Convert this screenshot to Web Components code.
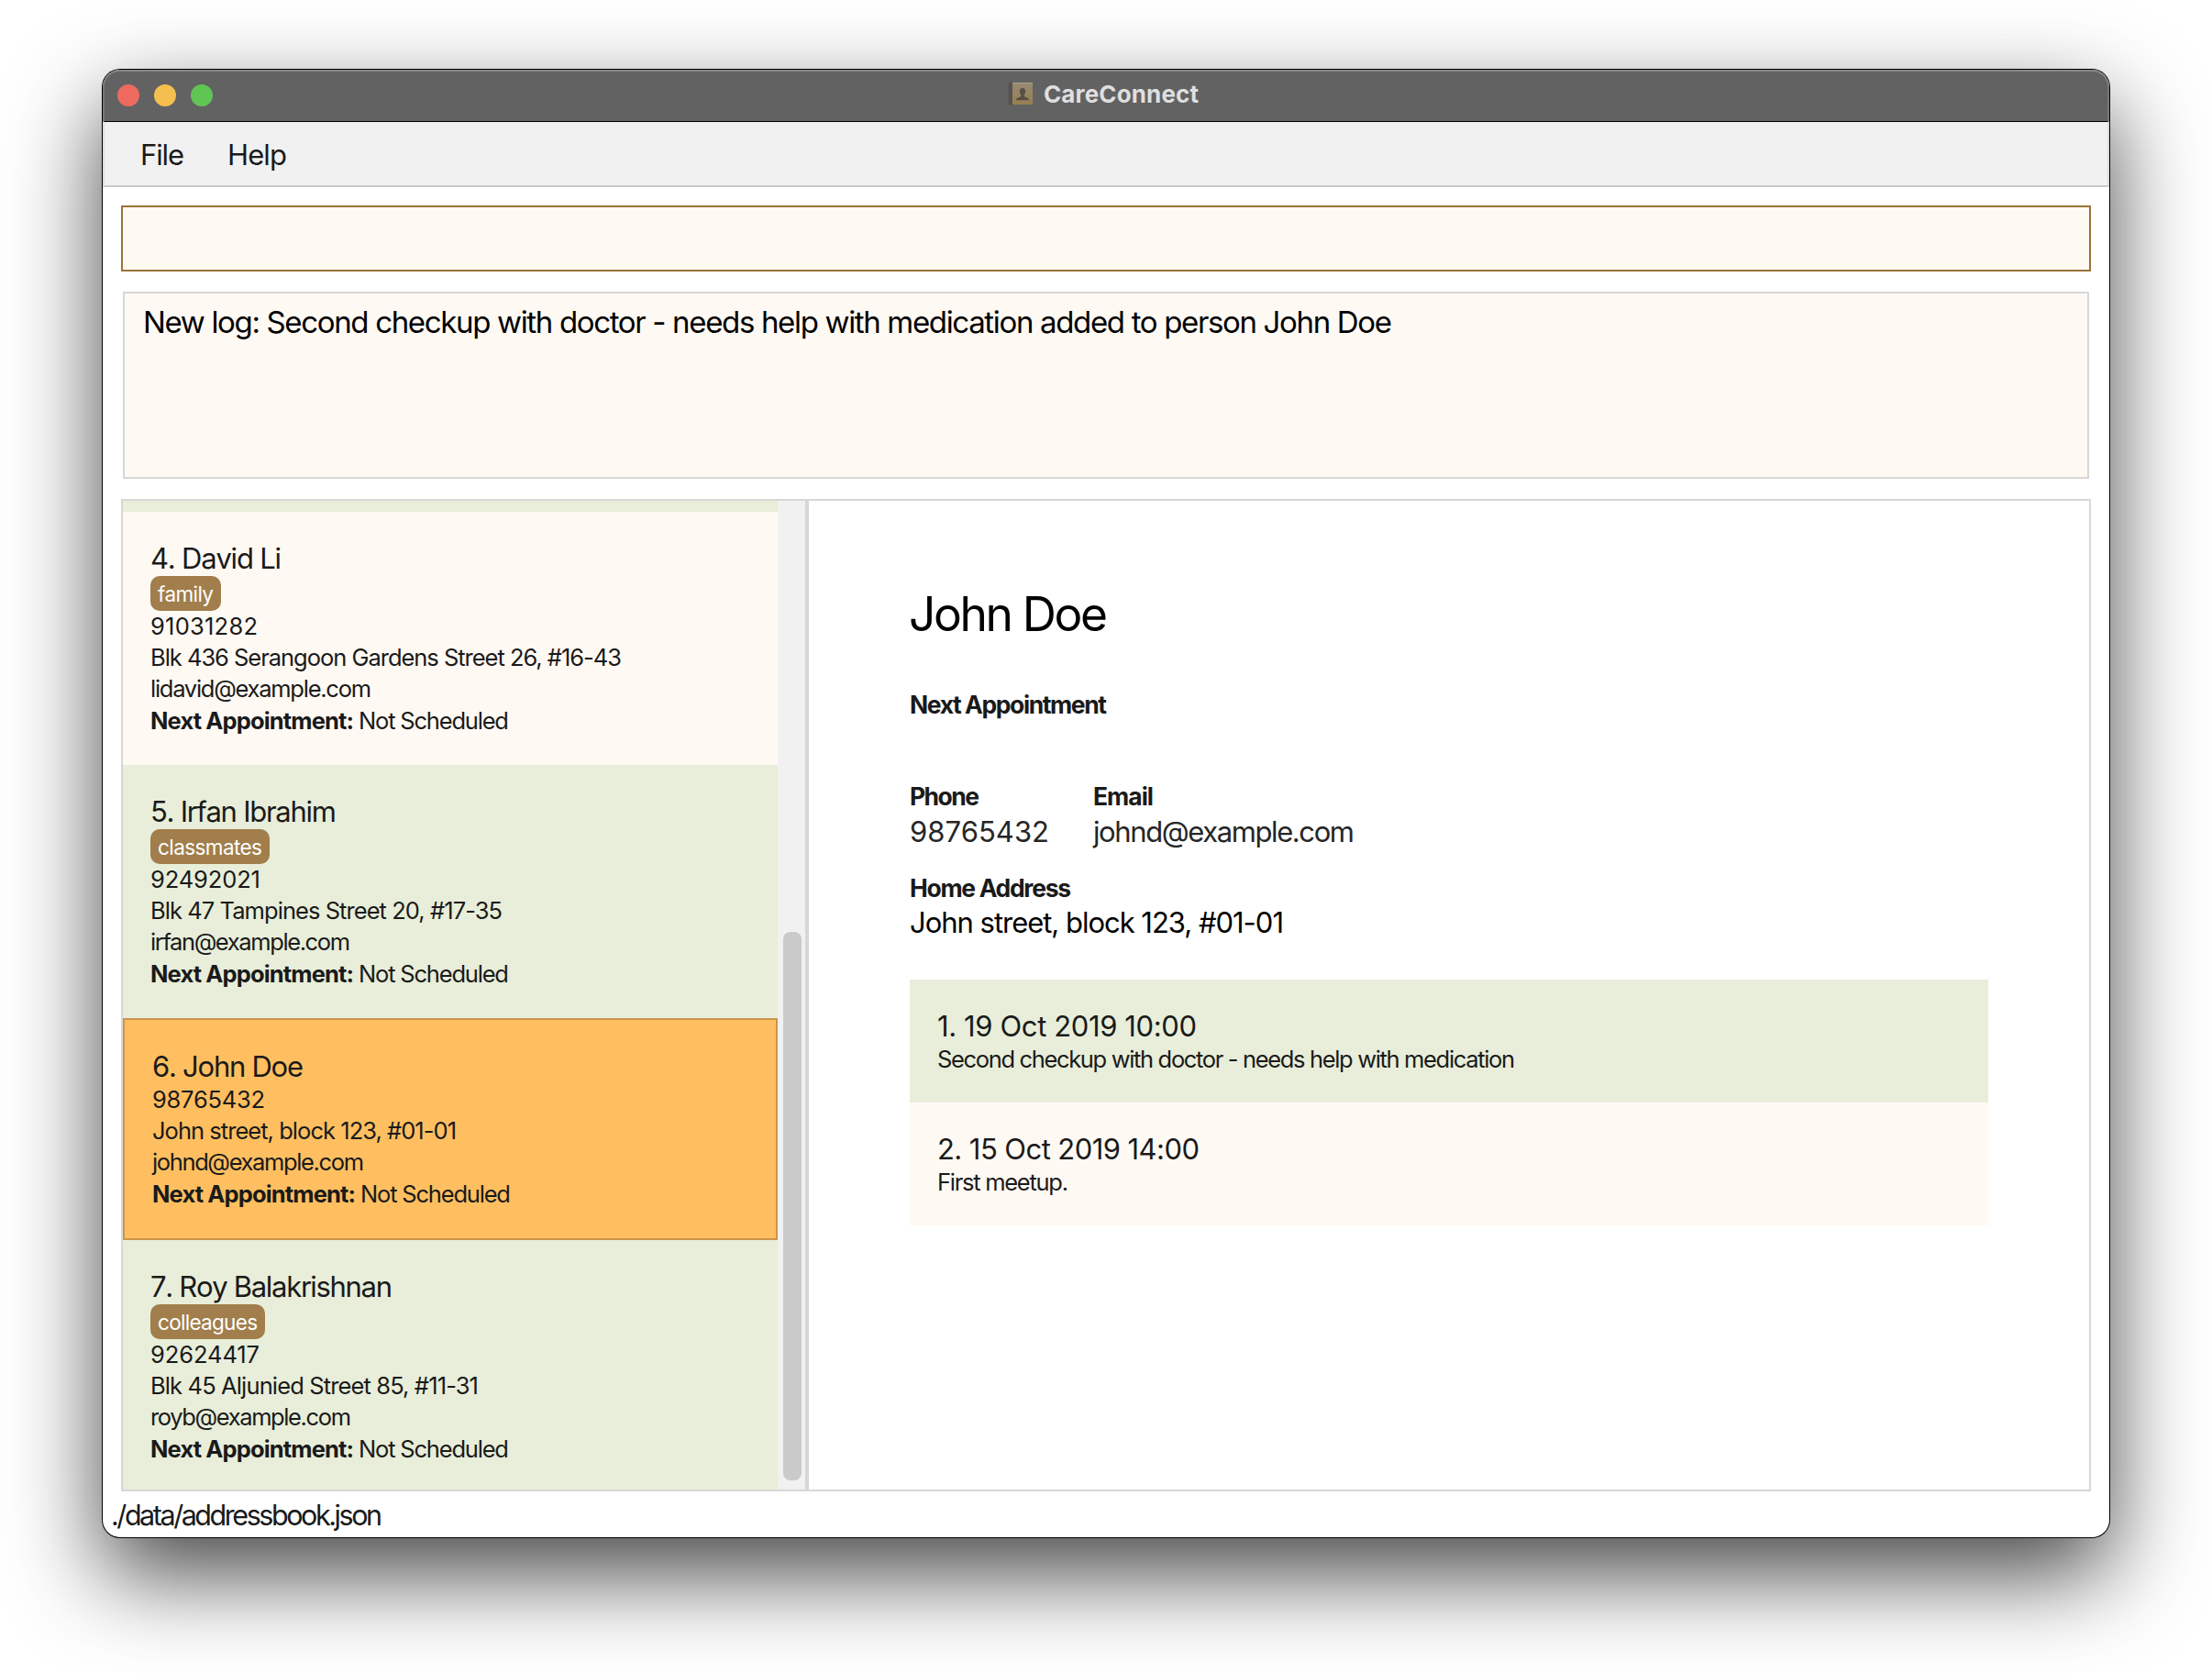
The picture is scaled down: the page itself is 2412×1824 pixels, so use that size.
<!DOCTYPE html>
<html lang="en"><head><meta charset="utf-8"><title>CareConnect</title>
<style>
html,body{margin:0;height:100%;background:#fff;overflow:hidden}
body{display:flex;font-family:Inter,"Liberation Sans",sans-serif;color:#1a1a1a}
</style></head><body>
<app-window></app-window>
<script>
const define=(name,html,after)=>customElements.define(name,class extends HTMLElement{
  constructor(){super();this.attachShadow({mode:'open'});}
  connectedCallback(){this.shadowRoot.innerHTML=typeof html==='function'?html(this):html;if(after)after(this);}
});

/* One line of text, tracked so that it spans w pixels. Attributes: s font size, w width, h line height. */
const lines=[];
define('text-line',e=>`<style>:host{display:block;white-space:pre;height:${e.getAttribute('h')||40}px;line-height:${e.getAttribute('h')||40}px;font-size:${e.getAttribute('s')}px}
span{display:inline-block}</style><span><slot></slot></span>`,e=>lines.push(e));
function track(){
  for(const e of lines){
    const w=+e.getAttribute('w');if(!w)continue;
    const s=e.shadowRoot.querySelector('span'),n=e.textContent.length;
    const d=(w-s.getBoundingClientRect().width)/(n-1);
    s.style.letterSpacing=d.toFixed(3)+'px';s.style.marginRight=(-d).toFixed(3)+'px';
  }
}

define('traffic-lights',`<style>:host{display:flex;gap:16px}i{width:24px;height:24px;border-radius:50%}</style>
<i style="background:#ed6a5e"></i><i style="background:#f5bf4f"></i><i style="background:#61c554"></i>`);

define('book-icon',`<style>:host{display:block;width:28px;height:26px;margin-bottom:4px}svg{display:block}</style>
<svg width="28" height="26" viewBox="0 0 28 26"><defs><linearGradient id="g" x1="0" y1="0" x2="0" y2="1"><stop offset="0" stop-color="#978a75"/><stop offset="1" stop-color="#95804f"/></linearGradient></defs>
<rect x="0.5" y="0.5" width="6" height="25" rx="1.5" fill="#575350"/><rect x="5" y="1" width="22" height="24" rx="1" fill="url(#g)"/><path d="M5 1.500h22" stroke="#aaa08e"/>
<path d="M16 7c2.200 0 3.200 1.500 3.200 3.600 0 1.700-.9 3-1.500 3.900v1.700c1.800.9 5.300 1.200 5.300 4.100H9c0-2.900 3.500-3.200 5.300-4.100v-1.700c-.6-.9-1.500-2.200-1.500-3.900C12.800 8.500 13.800 7 16 7z" fill="#574f45"/></svg>`);

define('title-bar',`<style>:host{display:grid;grid-template-columns:1fr auto 1fr;align-items:center;height:56px;box-sizing:border-box;padding:0 16px;background:#626262;box-shadow:inset 0 2px #868686,inset 2px 0 #777,inset -2px 0 #777;border-radius:19px 19px 0 0;color:#dfdfdf}
div{display:flex;align-items:center;gap:11px;padding-right:6px}text-line{font-weight:700}</style>
<traffic-lights></traffic-lights><div><book-icon></book-icon><text-line s="26" w="169" h="50" style="margin-bottom:3px">CareConnect</text-line></div><span></span>`);

define('menu-bar',`<style>:host{display:flex;gap:47px;height:72px;box-sizing:border-box;padding:0 39px;border:2px solid #c9c9c9;border-top:1px solid #000;border-left-color:#dcdcdc;border-right-color:#dcdcdc;background:#f1f1f1}</style>
<text-line s="31" w="48" h="71">File</text-line><text-line s="31" w="65" h="71">Help</text-line>`);

define('command-box',`<style>:host{display:block;height:72px;box-sizing:border-box;border:2px solid #9a7237;background:#fff9f3}</style>`);
define('result-box',`<style>:host{display:block;height:204px;box-sizing:border-box;margin:0 2px;border:2px solid #d7d7d7;background:#fff9f3;padding:10px 20px;color:#000}</style><slot></slot>`);

define('tag-chip',e=>`<style>:host{display:block;height:38px;width:max-content;box-sizing:border-box;padding:0 8px;border-radius:10px;background:#a17e4b;color:#fff}</style><text-line s="22.500" w="${e.getAttribute('w')}" h="39">${e.getAttribute('label')}</text-line>`);

define('person-card',e=>`<style>:host{display:flex;flex-direction:column;height:276px;flex:none;box-sizing:border-box;padding:32px 30px 0;background:${e.getAttribute('bg')}}
:host([selected]){height:242px;padding:32px 30px;border:2px solid #cc9549}
.next{display:flex;gap:5px;margin-top:1px}.tag{display:flex;height:38px}</style>
<slot name="name"></slot><div class="tag" ${e.hasAttribute('selected')?'style="display:none"':''}><slot name="tag"></slot></div>
<slot></slot>
<div class="next"><text-line style="font-weight:700" s="25.500" w="222" h="34">Next Appointment:</text-line><text-line s="25.500" w="164" h="34">Not Scheduled</text-line></div>`);

define('scroll-track',`<style>:host{display:flex;flex-direction:column;justify-content:flex-end;box-sizing:border-box;width:30px;padding:0 4px 10px 6px;background:#f1f1f1}i{height:598px;border-radius:8px;background:#cacaca}</style><i></i>`);

const p=(bg,name,nw,tag,tw,rows,sel)=>`<person-card bg="${bg}" ${sel?'selected':''}><text-line slot="name" style="font-kerning:none" s="31" w="${nw}" h="38">${name}</text-line>${tag?`<tag-chip slot="tag" label="${tag}" w="${tw}"></tag-chip>`:''}${rows.map(r=>`<text-line s="25.500" w="${r[1]}" h="34">${r[0]}</text-line>`).join('')}</person-card>`;
define('person-list',`<style>:host{display:flex;flex-direction:column;width:714px;overflow:hidden}i{height:12px;flex:none;background:#e8eed9}</style><i></i>`
+p('#fff9f3','4. David Li',143,'family',61,[['91031282',117],['Blk 436 Serangoon Gardens Street 26, #16-43',514],['lidavid@example.com',241]])
+p('#e8eed9','5. Irfan Ibrahim',203,'classmates',114,[['92492021',120],['Blk 47 Tampines Street 20, #17-35',384],['irfan@example.com',218]])
+p('#ffbf60','6. John Doe',165,'',0,[['98765432',123],['John street, block 123, #01-01',332],['johnd@example.com',231]],1)
+p('#e8eed9','7. Roy Balakrishnan',264,'colleagues',109,[['92624417',119],['Blk 45 Aljunied Street 85, #11-31',358],['royb@example.com',219]]));

define('log-card',e=>`<style>:host{display:flex;flex-direction:column;height:134px;box-sizing:border-box;padding:32px 30px;background:${e.getAttribute('bg')}}</style><slot></slot>`);

define('person-detail',`<style>:host{display:flex;flex-direction:column;flex:1;padding:90px 110px 0}
.b{font-weight:700}.pair{display:flex;gap:49px}.light{color:#262626}section{display:flex;flex-direction:column;margin-top:41px}</style>
<text-line style="color:#000;margin-left:-1px" s="51.500" w="217" h="66">John Doe</text-line>
<text-line class="b" style="margin-top:49px" s="26.500" w="215" h="34">Next Appointment</text-line>
<div class="pair" style="margin-top:66px"><div><text-line class="b" s="26.500" w="76" h="34">Phone</text-line><text-line class="light" s="31" w="152" h="44">98765432</text-line></div>
<div style="margin-left:-1px"><text-line class="b" s="26.500" w="66" h="34">Email</text-line><text-line class="light" s="31" w="285" h="44">johnd@example.com</text-line></div></div>
<text-line class="b" style="margin-top:22px" s="26.500" w="176" h="34">Home Address</text-line>
<text-line style="color:#000" s="31" w="408" h="42">John street, block 123, #01-01</text-line>
<section><log-card bg="#e8eed9"><text-line s="31" w="283" h="38">1. 19 Oct 2019 10:00</text-line><text-line s="25.500" w="630" h="34">Second checkup with doctor - needs help with medication</text-line></log-card>
<log-card bg="#fff9f3"><text-line s="31" w="286" h="38">2. 15 Oct 2019 14:00</text-line><text-line s="25.500" w="143" h="34">First meetup.</text-line></log-card></section>`);

define('split-pane',`<style>:host{display:flex;height:1082px;box-sizing:border-box;border:2px solid #d7d7d7}i{width:4px;background:#d7d7d7}</style>
<person-list></person-list><scroll-track></scroll-track><i></i><person-detail></person-detail>`);

define('app-window',`<style>:host{display:block;width:2188px;height:1600px;margin:76px 0 0 112px;border-radius:19px;background:#fff;box-shadow:0 0 0 1px #000,0 40px 100px rgba(0,0,0,.73)}
main{display:flex;flex-direction:column;padding:20px 20px 0;gap:22px}footer{padding:6px 9px}</style>
<title-bar></title-bar><menu-bar></menu-bar>
<main><command-box></command-box><result-box><text-line s="33" w="1362" h="42">New log: Second checkup with doctor - needs help with medication added to person John Doe</text-line></result-box><split-pane></split-pane></main>
<footer><text-line s="30.500" w="296" h="40">./data/addressbook.json</text-line></footer>`);
track();
</script>
</body></html>
